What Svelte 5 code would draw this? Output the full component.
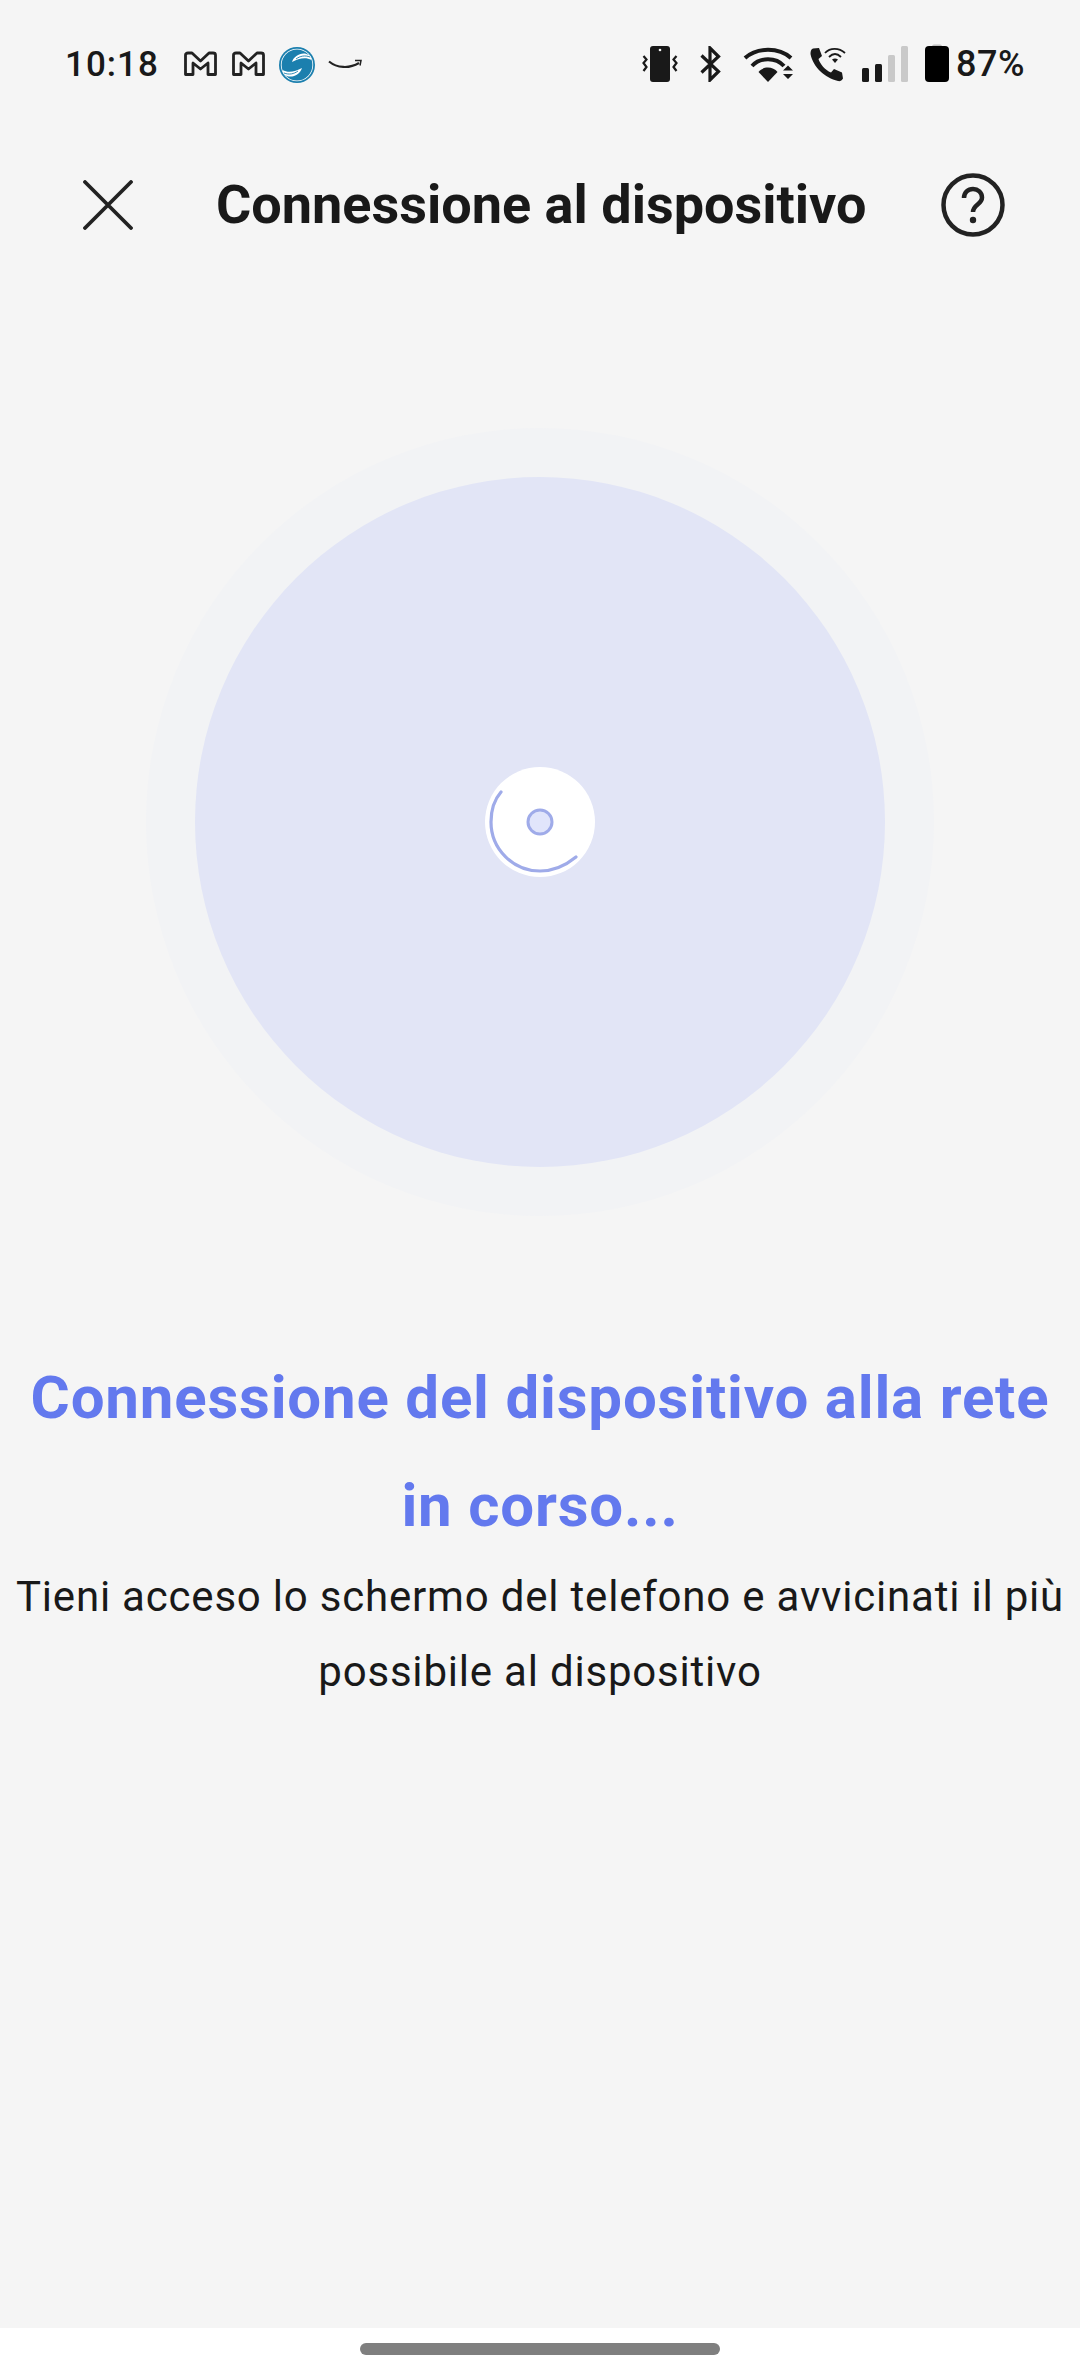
<script>
  const signal = [
    { h: 14, on: true },
    { h: 18, on: true },
    { h: 27, on: false },
    { h: 36, on: false }
  ];
  const mPath = "M1.500 23.500V4Q1.500 2 4 2H8L16.500 10 25 2H29Q31.500 2 31.500 4V23.500H24V12L16.500 18 9 12V23.500Z";
</script>

<div class="page">
  <div class="status">
    <span class="time">10:18</span>
    <svg class="m m1" width="33" height="25" viewBox="0 0 33 25"><path class="mo" d={mPath}/></svg>
    <svg class="m m2" width="33" height="25" viewBox="0 0 33 25"><path class="mo" d={mPath}/></svg>
    <svg class="sphere" width="36" height="36" viewBox="0 0 36 36">
      <circle cx="18" cy="18" r="18" fill="#1b7fae"/>
      <circle cx="18" cy="18" r="16.200" fill="#fff"/>
      <circle cx="18" cy="18" r="15.400" fill="#1b7fae"/>
      <path d="M13 15C15 8 24 4 30 8c1.500 1.500 2 3 2.500 5C27 10 20 11 13 15z" fill="#fff"/>
      <path d="M23 21C21 28 12 32 6 28c-1.500-1.500-2-3-2.500-5C9 26 16 25 23 21z" fill="#fff"/>
      <path d="M17 12C21 9 26 8 31 10M19 24C15 27 10 28 5 26" fill="none" stroke="#1b7fae" stroke-width=".9"/>
    </svg>
    <svg class="amazon" width="34" height="12" viewBox="0 0 34 12" fill="none">
      <path d="M1 2.500C9 9 21 10 31 4" stroke="#222" stroke-width="2.200"/>
      <path d="M27 1.500h6l-1 5" stroke="#222" stroke-width="1.500"/>
    </svg>

    <div class="right">
      <svg class="vib" width="36" height="36" viewBox="0 0 36 36">
        <rect x="8" y="0" width="20" height="36" rx="3" fill="#191919"/>
        <circle cx="18" cy="4" r="1.300" fill="#f5f5f5"/>
        <path d="M1.500 10l3 3.500-3 3.500 3 4-3 4M34.500 10l-3 3.500 3 3.500-3 4 3 4" fill="none" stroke="#191919" stroke-width="2.200"/>
      </svg>
      <svg class="bt" width="21" height="36" viewBox="0 0 21 36" fill="none">
        <path d="M1.500 9.500L18.500 25.500 10 34V2l8.500 8.500L1.500 26.500" stroke="#191919" stroke-width="3.200"/>
      </svg>
      <svg class="wifi" width="52" height="36" viewBox="0 0 52 36">
        <g fill="none" stroke="#191919" stroke-width="4">
          <path d="M2 12C14 1 36 1 48 12"/>
          <path d="M9 20C17 11 33 11 41 20"/>
        </g>
        <path d="M15.500 26C20 20 30 20 34.500 26L25 36z" fill="#191919"/>
        <path d="M40 24.500l5-5 5 5zM40 28h10l-5 5z" fill="#191919"/>
      </svg>
      <svg class="call" width="36" height="36" viewBox="0 0 36 36">
        <path d="M3 1.500L9 1l3 8-3.500 3C10 17 15 23 21 25.500l3-3.500 8 3.500 1 6c-1 2-3 3-5 2.500C15 31 3 20 0.500 7 .5 4 1 2.500 3 1.500z" fill="#191919"/>
        <g fill="none" stroke="#191919" stroke-width="1.800">
          <path d="M15 6C20 .5 29 .5 35 6"/>
          <path d="M19 10C23 6 27 6 31 10"/>
        </g>
        <path d="M22 12.500c2-1.500 4-1.500 6 0L25 16z" fill="#191919"/>
      </svg>
      <div class="signal">
        {#each signal as bar}
          <i class:on={bar.on} style="height:{bar.h}px"></i>
        {/each}
      </div>
      <svg class="battery" width="24" height="38" viewBox="0 0 24 38">
        <path d="M7 2.500Q7 .5 9 .5h6q2 0 2 2z" fill="#bdbdbd"/>
        <rect y="2" width="24" height="36" rx="4" fill="#000"/>
      </svg>
      <span class="pct">87%</span>
    </div>
  </div>

  <header class="bar">
    <svg class="close" width="50" height="50" viewBox="0 0 50 50" fill="none">
      <path d="M2 2L48 48M48 2L2 48" stroke="#222" stroke-width="3.800" stroke-linecap="round"/>
    </svg>
    <h1>Connessione al dispositivo</h1>
    <svg class="help" width="64" height="64" viewBox="0 0 64 64" fill="none">
      <circle cx="32" cy="32" r="29.500" stroke="#222" stroke-width="4.500"/>
      <path d="M23 25c0-5.500 4-9 9-9s9 3.500 9 8.500c0 7-9 7-9 14.500" stroke="#222" stroke-width="4.500"/>
      <circle cx="32" cy="47" r="3.200" fill="#222"/>
    </svg>
  </header>

  <div class="stage">
    <div class="outer">
      <div class="inner">
        <div class="spinner">
          <svg width="110" height="110" viewBox="0 0 110 110" fill="none">
            <path d="M16 25C9 33 6 43 6 55c0 27 22 49 49 49 14 0 25-5 36-14" stroke="#9fabe9" stroke-width="3.200" stroke-linecap="round"/>
            <circle cx="55" cy="55" r="12" fill="#e1e5fb" stroke="#9fabe9" stroke-width="3"/>
          </svg>
        </div>
      </div>
    </div>
  </div>

  <main class="copy">
    <h2>Connessione del dispositivo alla rete<br />in corso...</h2>
    <p>Tieni acceso lo schermo del telefono e avvicinati il più<br />possibile al dispositivo</p>
  </main>

  <div class="nav"><span></span></div>
</div>

<style>
  :global(body) { margin: 0; }
  .page {
    width: 1080px;
    height: 2376px;
    background: #f5f5f5;
    display: flex;
    flex-direction: column;
    font-family: Roboto, sans-serif;
    color: #191919;
    overflow: hidden;
  }
  .status {
    height: 128px;
    box-sizing: border-box;
    padding: 44px 55px 0 65px;
    display: flex;
    align-items: flex-start;
    flex: none;
  }
  .time {
    font-size: 35px;
    font-weight: 500;
    line-height: 41px;
    letter-spacing: 1px;
    width: 119px;
  }
  .m { margin-top: 7px; }
  .m2 { margin-left: 15px; }
  .mo { fill: #f5f5f5; stroke: #222; stroke-width: 2.800; stroke-linejoin: round; }
  .sphere { margin: 3px 0 0 14px; }
  .amazon { margin: 15px 0 0 13px; }
  .right { margin-left: auto; display: flex; align-items: flex-start; }
  .vib { margin-top: 2px; }
  .bt { margin: 2px 0 0 22px; }
  .wifi { margin: 2px 0 0 22px; }
  .call { margin: 3px 0 0 15px; }
  .signal { display: flex; align-items: flex-end; gap: 6px; height: 36px; margin: 2px 0 0 16px; }
  .signal i { width: 7px; background: #c9c9c9; border-radius: 1.500px; }
  .signal i.on { background: #191919; }
  .battery { margin: 0 0 0 17px; }
  .pct {
    font-size: 36px;
    font-weight: 500;
    line-height: 41px;
    letter-spacing: 0.5px;
    margin-left: 7px;
  }
  .bar {
    flex: none;
    height: 120px;
    margin-top: 17px;
    box-sizing: border-box;
    padding: 0 0 0 83px;
    display: flex;
    align-items: center;
  }
  .bar h1 {
    margin: 0 0 0 83px;
    font-size: 54px;
    line-height: 60px;
    font-weight: 700;
    white-space: nowrap;
  }
  .help { margin-left: 74px; }
  .stage { flex: none; display: flex; justify-content: center; padding-top: 163px; }
  .outer {
    width: 788px;
    height: 788px;
    border-radius: 50%;
    background: #f2f3f5;
    display: flex;
    align-items: center;
    justify-content: center;
  }
  .inner {
    width: 690px;
    height: 690px;
    border-radius: 50%;
    background: #e2e5f6;
    display: flex;
    align-items: center;
    justify-content: center;
  }
  .spinner {
    width: 110px;
    height: 110px;
    border-radius: 50%;
    background: #fff;
  }
  .spinner svg { display: block; }
  .copy { flex: none; text-align: center; padding-top: 128px; }
  .copy h2 {
    margin: 0;
    font-size: 60px;
    line-height: 108px;
    font-weight: 700;
    letter-spacing: 0.8px;
    color: #6379ee;
    white-space: nowrap;
  }
  .copy p {
    margin: -1px 0 0;
    font-size: 42px;
    line-height: 75px;
    letter-spacing: 0.8px;
    white-space: nowrap;
  }
  .nav {
    margin-top: auto;
    height: 48px;
    flex: none;
    background: #fff;
    display: flex;
    justify-content: center;
    padding-top: 15px;
    box-sizing: border-box;
  }
  .nav span { width: 360px; height: 12px; border-radius: 6px; background: #7f7f7f; }
</style>
